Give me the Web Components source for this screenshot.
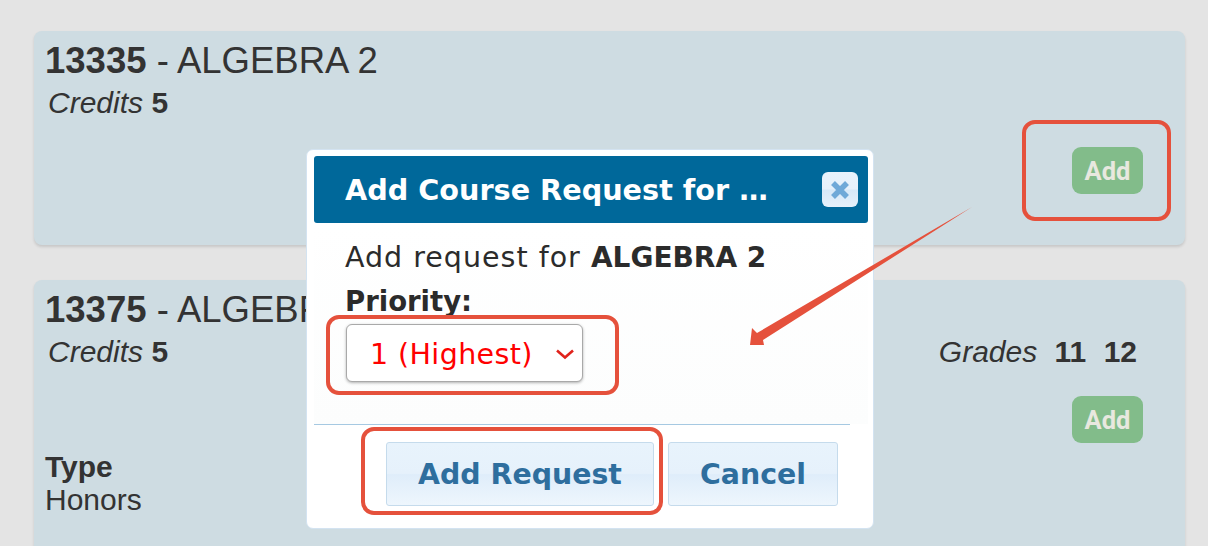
<!DOCTYPE html>
<html>
<head>
<meta charset="utf-8">
<style>
html,body{margin:0;height:546px;overflow:hidden;background:#e4e4e4;}
body{padding:31px 23px 0 34px;box-sizing:border-box;font-family:"Liberation Sans",Arial,sans-serif;color:#333;}
</style>
</head>
<body>
<course-card code="13335" name="ALGEBRA 2" credits="5" style="height:214px;margin-bottom:35px"></course-card>
<course-card code="13375" name="ALGEBRA 2" credits="5" grades="11,12" type="Honors" style="height:266px;border-radius:8px 8px 0 0"></course-card>

<request-dialog course="ALGEBRA 2"></request-dialog>
<mark-up></mark-up>

<script>
class AddButton extends HTMLElement{
    constructor(){
        super();
        this.attachShadow({mode:"open"});
        this.shadowRoot.innerHTML = `
<style>
:host{display:block;width:71px;height:47px;}
button{all:unset;box-sizing:border-box;display:flex;align-items:center;justify-content:center;width:100%;height:100%;
    background:#82bc8a;border-radius:9px;color:#e8e8df;font:700 25.5px Roboto,sans-serif;}
</style>
<button>Add</button>`;
    }
}
customElements.define('add-button', AddButton);

class CourseCard extends HTMLElement{
    constructor(){
        super();
        this.attachShadow({mode:"open"});
        const grades = (this.getAttribute('grades') || '').split(',').filter(g => g);
        const type = this.getAttribute('type');
        this.shadowRoot.innerHTML = `
<style>
:host{display:block;box-sizing:border-box;background:#cedce2;border-radius:8px;box-shadow:0 2px 3px rgba(0,0,0,.13);
    padding:10px 42px 0 11px;color:#333;}
h2{margin:0;font:400 36.5px/40px "Liberation Sans",sans-serif;}
h2 b{font-weight:700;}
.row{display:flex;justify-content:space-between;font-size:30px;line-height:34px;margin-top:5px;padding-left:3px;}
.row i b{font-style:normal;}
.grades b{margin-left:9px;}
.grades{padding-right:6px;}
add-button{margin:27px 0 0 auto;}
.type{margin-top:7px;font-size:30px;line-height:33px;}
.type b{display:block;}
</style>
<h2><b>${this.getAttribute('code')}</b> - ${this.getAttribute('name')}</h2>
<div class="row">
    <span><i>Credits</i> <b>${this.getAttribute('credits')}</b></span>
    ${grades.length ? `<span class="grades"><i>Grades</i>${grades.map(g => ` <b>${g}</b>`).join('')}</span>` : ''}
</div>
<add-button></add-button>
${type ? `<div class="type"><b>Type</b>${type}</div>` : ''}`;
    }
}
customElements.define('course-card', CourseCard);

class PrioritySelect extends HTMLElement{
    constructor(){
        super();
        this.attachShadow({mode:"open"});
        this.shadowRoot.innerHTML = `
<style>
:host{display:flex;box-sizing:border-box;width:237px;height:58px;align-items:center;justify-content:space-between;
    padding:2px 7px 0 23px;background:#fff;border:1px solid #a9a9a9;border-radius:6px;box-shadow:0 1px 3px rgba(0,0,0,.3);
    color:#f00;font:400 28.5px "DejaVu Sans",sans-serif;letter-spacing:.4px;}
svg{display:block;}
</style>
<span><slot></slot></span>
<svg width="20" height="12" viewBox="0 0 20 12"><path d="M2 2.5l8 7 8-7" fill="none" stroke="#e0231c" stroke-width="2.6"/></svg>`;
    }
}
customElements.define('priority-select', PrioritySelect);

class DialogButton extends HTMLElement{
    constructor(){
        super();
        this.attachShadow({mode:"open"});
        this.shadowRoot.innerHTML = `
<style>
:host{display:flex;box-sizing:border-box;height:64px;align-items:center;justify-content:center;
    border:1px solid #c5dbec;border-radius:3px;color:#2e6e9e;font:700 28.4px "DejaVu Sans",sans-serif;
    background:linear-gradient(#e8f3fc 0,#e6f1fb 49%,#dfedfa 51%,#eef6fd 100%);}
</style>
<slot></slot>`;
    }
}
customElements.define('dialog-button', DialogButton);

class RequestDialog extends HTMLElement{
    constructor(){
        super();
        this.attachShadow({mode:"open"});
        this.shadowRoot.innerHTML = `
<style>
:host{position:absolute;left:306px;top:149px;width:568px;height:380px;box-sizing:border-box;
    padding:6px 5px 0 7px;background:#fff;border:1px solid #d3e3f1;border-radius:7px;color:#2b2b2b;font-family:"DejaVu Sans",sans-serif;}
header{display:flex;align-items:center;justify-content:space-between;height:67px;padding:0 10px 0 31px;
    background:#00689a;border-radius:3px;color:#fff;font-weight:700;font-size:28.7px;}
.close{display:flex;align-items:center;justify-content:center;box-sizing:border-box;width:36px;height:35px;border-radius:6px;
    background:linear-gradient(#e8f3fc 0,#e6f1fb 49%,#d6e8f8 51%,#e6f1fb 100%);}
.body{box-sizing:border-box;height:201px;padding:15px 0 0 31px;font-size:28.5px;letter-spacing:1px;background:linear-gradient(#fff,#fcfdfd);}
.line{line-height:40px;height:40px;}
.line b{font-size:28px;letter-spacing:0;}
.priority{line-height:40px;height:45px;font-weight:700;font-size:27.5px;letter-spacing:0;margin-top:3px;}
priority-select{margin-left:1px;margin-top:-2px;letter-spacing:.4px;}
footer{display:flex;justify-content:flex-end;gap:14px;width:536px;box-sizing:border-box;padding:17px 12px 0 0;border-top:1px solid #a6c9e2;}
footer dialog-button:first-child{width:268px;}
footer dialog-button:last-child{width:170px;}
</style>
<header>
    <span>Add Course Request for …</span>
    <span class="close"><svg width="20" height="20" viewBox="0 0 20 20"><path d="M3 3l14 14M17 3L3 17" stroke="#6fa9d8" stroke-width="5.5" fill="none"/></svg></span>
</header>
<div class="body">
    <div class="line">Add request for <b>${this.getAttribute('course')}</b></div>
    <div class="priority">Priority:</div>
    <priority-select>1 (Highest)</priority-select>
</div>
<footer>
    <dialog-button>Add Request</dialog-button>
    <dialog-button>Cancel</dialog-button>
</footer>`;
    }
}
customElements.define('request-dialog', RequestDialog);

// red annotations drawn on top of the screenshot
class MarkUp extends HTMLElement{
    constructor(){
        super();
        this.attachShadow({mode:"open"});
        this.shadowRoot.innerHTML = `
<style>
:host{position:absolute;left:0;top:0;width:1208px;height:546px;pointer-events:none;}
svg{display:block;}
rect{fill:none;stroke:#e5513c;stroke-width:4;}
</style>
<svg width="1208" height="546" viewBox="0 0 1208 546">
    <rect x="1024" y="122" width="145" height="97" rx="11"/>
    <rect x="328" y="317" width="289" height="76" rx="11"/>
    <rect x="363" y="429" width="298" height="84" rx="11"/>
    <path d="M972 207L757 333 752 328 750 345 764 345 763 340Z" fill="#e5513c"/>
</svg>`;
    }
}
customElements.define('mark-up', MarkUp);
</script>
</body>
</html>
